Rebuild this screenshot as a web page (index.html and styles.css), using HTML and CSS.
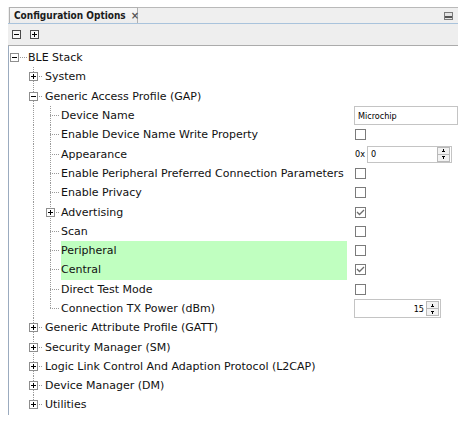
FILE: index.html
```html
<!DOCTYPE html>
<html>
<head>
<meta charset="utf-8">
<link rel="stylesheet" href="styles.css">
</head>
<body>
<div class="panel">
  <div class="tabbar">
    <div class="tab"><span class="tab-title">Configuration Options</span><span class="tab-close">×</span></div>
    <div class="tab-fill"><span class="min-btn"></span></div>
  </div>
  <div class="toolbar">
    <span class="tbtn minus"></span>
    <span class="tbtn plus"></span>
  </div>
  <div class="tree">
    <div class="row">
      <div class="tcell"><span class="conn root"><span class="box minus"></span></span><span class="label">BLE Stack</span></div>
      <div class="val"></div>
    </div>
    <div class="row">
      <div class="tcell"><span class="guide l0"></span><span class="conn l1"><span class="box plus"></span></span><span class="label">System</span></div>
      <div class="val"></div>
    </div>
    <div class="row">
      <div class="tcell"><span class="guide l0"></span><span class="conn l1"><span class="box minus"></span></span><span class="label">Generic Access Profile (GAP)</span></div>
      <div class="val"></div>
    </div>
    <div class="row">
      <div class="tcell"><span class="guide l0"></span><span class="guide l1 line"></span><span class="conn l2"></span><span class="label">Device Name</span></div>
      <div class="val"><span class="field name-field">Microchip</span></div>
    </div>
    <div class="row">
      <div class="tcell"><span class="guide l0"></span><span class="guide l1 line"></span><span class="conn l2"></span><span class="label">Enable Device Name Write Property</span></div>
      <div class="val"><span class="cb"></span></div>
    </div>
    <div class="row">
      <div class="tcell"><span class="guide l0"></span><span class="guide l1 line"></span><span class="conn l2"></span><span class="label">Appearance</span></div>
      <div class="val"><span class="hex">0x</span><span class="field spin-field hex-field"><span class="spin-text">0</span><span class="spin"><span class="sb up"></span><span class="sb down"></span></span></span></div>
    </div>
    <div class="row">
      <div class="tcell"><span class="guide l0"></span><span class="guide l1 line"></span><span class="conn l2"></span><span class="label">Enable Peripheral Preferred Connection Parameters</span></div>
      <div class="val"><span class="cb"></span></div>
    </div>
    <div class="row">
      <div class="tcell"><span class="guide l0"></span><span class="guide l1 line"></span><span class="conn l2"></span><span class="label">Enable Privacy</span></div>
      <div class="val"><span class="cb"></span></div>
    </div>
    <div class="row">
      <div class="tcell"><span class="guide l0"></span><span class="guide l1 line"></span><span class="conn l2"><span class="box plus"></span></span><span class="label">Advertising</span></div>
      <div class="val"><span class="cb checked"><svg viewBox="0 0 11 11" width="11" height="11"><polyline points="2,5 4.5,7.5 9,3" fill="none" stroke="#6d6d6d" stroke-width="1.3"/></svg></span></div>
    </div>
    <div class="row">
      <div class="tcell"><span class="guide l0"></span><span class="guide l1 line"></span><span class="conn l2"></span><span class="label">Scan</span></div>
      <div class="val"><span class="cb"></span></div>
    </div>
    <div class="row">
      <div class="tcell"><span class="guide l0"></span><span class="guide l1 line"></span><span class="conn l2"></span><span class="label hl">Peripheral</span></div>
      <div class="val"><span class="cb"></span></div>
    </div>
    <div class="row">
      <div class="tcell"><span class="guide l0"></span><span class="guide l1 line"></span><span class="conn l2"></span><span class="label hl">Central</span></div>
      <div class="val"><span class="cb checked"><svg viewBox="0 0 11 11" width="11" height="11"><polyline points="2,5 4.5,7.5 9,3" fill="none" stroke="#6d6d6d" stroke-width="1.3"/></svg></span></div>
    </div>
    <div class="row">
      <div class="tcell"><span class="guide l0"></span><span class="guide l1 line"></span><span class="conn l2"></span><span class="label">Direct Test Mode</span></div>
      <div class="val"><span class="cb"></span></div>
    </div>
    <div class="row">
      <div class="tcell"><span class="guide l0"></span><span class="guide l1 line"></span><span class="conn l2 last"></span><span class="label">Connection TX Power (dBm)</span></div>
      <div class="val"><span class="field spin-field tx-field"><span class="spin-text right">15</span><span class="spin"><span class="sb up"></span><span class="sb down"></span></span></span></div>
    </div>
    <div class="row">
      <div class="tcell"><span class="guide l0"></span><span class="conn l1"><span class="box plus"></span></span><span class="label">Generic Attribute Profile (GATT)</span></div>
      <div class="val"></div>
    </div>
    <div class="row">
      <div class="tcell"><span class="guide l0"></span><span class="conn l1"><span class="box plus"></span></span><span class="label">Security Manager (SM)</span></div>
      <div class="val"></div>
    </div>
    <div class="row">
      <div class="tcell"><span class="guide l0"></span><span class="conn l1"><span class="box plus"></span></span><span class="label">Logic Link Control And Adaption Protocol (L2CAP)</span></div>
      <div class="val"></div>
    </div>
    <div class="row">
      <div class="tcell"><span class="guide l0"></span><span class="conn l1"><span class="box plus"></span></span><span class="label">Device Manager (DM)</span></div>
      <div class="val"></div>
    </div>
    <div class="row">
      <div class="tcell"><span class="guide l0"></span><span class="conn l1 last"><span class="box plus"></span></span><span class="label">Utilities</span></div>
      <div class="val"></div>
    </div>
  </div>
</div>
</body>
</html>
```
FILE: styles.css
```css
html, body {
  margin: 0;
  padding: 0;
  background: #ffffff;
}

body {
  font-family: "DejaVu Sans", sans-serif;
  font-size: 11px;
  color: #000000;
}

.panel {
  margin: 7px 0 0 8px;
  width: 450px;
}

/* ---------- tab header ---------- */
.tabbar {
  display: flex;
  height: 16px;
  border-bottom: 1px solid #a9c3dc;
  background: #efefef;
}

.tab {
  display: flex;
  align-items: center;
  width: 129px;
  margin-left: 1px;
  padding-left: 4px;
  box-sizing: border-box;
  border: 1px solid #b1b1b1;
  border-bottom: none;
  background: linear-gradient(#f7f7f7, #ececec);
  white-space: nowrap;
}

.tab-title {
  font-family: "DejaVu Sans Condensed", "DejaVu Sans", sans-serif;
  font-stretch: condensed;
  font-weight: bold;
  font-size: 10px;
  color: #1b1b1b;
}

.tab-close {
  margin-left: 5px;
  font-size: 10px;
  font-weight: bold;
  color: #555555;
}

.tab-fill {
  flex: 1;
  display: flex;
  align-items: center;
  justify-content: flex-end;
  border-top: 1px solid #b9b9b9;
  padding-right: 5px;
}

.min-btn {
  width: 7px;
  height: 6px;
  border: 1px solid #7a7a7a;
  background: linear-gradient(to bottom, #e4e4e4 0 3px, #555555 3px 5px, #e4e4e4 5px);
}

/* ---------- toolbar ---------- */
.toolbar {
  display: flex;
  align-items: center;
  gap: 9px;
  height: 21px;
  padding-left: 4px;
  background: #eeeeee;
  border-bottom: 1px solid #ababab;
}

.tbtn {
  width: 7px;
  height: 7px;
  border: 1px solid #4a4a4a;
  background-color: #f6f6f6;
}

.tbtn.minus {
  background-image: linear-gradient(#000, #000);
  background-size: 5px 1px;
  background-position: center;
  background-repeat: no-repeat;
}

.tbtn.plus {
  background-image: linear-gradient(#000, #000), linear-gradient(#000, #000);
  background-size: 5px 1px, 1px 5px;
  background-position: center, center;
  background-repeat: no-repeat;
}

/* ---------- tree ---------- */
.tree {
  border-left: 1px solid #9babbf;
  padding-top: 2px;
  height: 367px;
  background: #ffffff;
}

.row {
  display: flex;
  height: 19.3px;
  align-items: stretch;
}

.tcell {
  display: flex;
  width: 338px;
  align-items: stretch;
}

.guide, .conn {
  flex: none;
  display: flex;
  align-items: center;
}

.l0 { width: 19px; }
.l1 { width: 17px; }
.l2 { width: 16px; }

.guide.line {
  background: repeating-linear-gradient(to bottom, #9a9a9a 0 1px, transparent 1px 2px) 5px 0 / 1px 100% no-repeat;
}

.conn {
  background:
    repeating-linear-gradient(to bottom, #9a9a9a 0 1px, transparent 1px 2px) 5px 0 / 1px 100% no-repeat,
    repeating-linear-gradient(to right, #9a9a9a 0 1px, transparent 1px 2px) 5px 50% / 10px 1px no-repeat;
}

.conn.last {
  background:
    repeating-linear-gradient(to bottom, #9a9a9a 0 1px, transparent 1px 2px) 5px 0 / 1px 50% no-repeat,
    repeating-linear-gradient(to right, #9a9a9a 0 1px, transparent 1px 2px) 5px 50% / 10px 1px no-repeat;
}

.conn.root {
  width: 19px;
  background: repeating-linear-gradient(to right, #9a9a9a 0 1px, transparent 1px 2px) 5px 50% / 13px 1px no-repeat;
}

.box {
  width: 7px;
  height: 7px;
  margin-left: 1px;
  border: 1px solid #8e8e8e;
  background-color: #ffffff;
  background-repeat: no-repeat;
}

.box.minus {
  background-image: linear-gradient(#000, #000);
  background-size: 5px 1px;
  background-position: center;
}

.box.plus {
  background-image: linear-gradient(#000, #000), linear-gradient(#000, #000);
  background-size: 5px 1px, 1px 5px;
  background-position: center, center;
}

.label {
  flex: 1;
  display: flex;
  align-items: center;
  white-space: nowrap;
  color: #111111;
}

.label.hl {
  background: #c0ffc0;
}

/* ---------- value column ---------- */
.val {
  display: flex;
  align-items: center;
  margin-left: 5px;
  padding-left: 2px;
  flex: 1;
  font-family: "DejaVu Sans Condensed", "DejaVu Sans", sans-serif;
  font-stretch: condensed;
}

.field {
  display: flex;
  align-items: center;
  box-sizing: border-box;
  background: #ffffff;
  border: 1px solid #c4c4c4;
  font-size: 9px;
  color: #000000;
}

.name-field {
  width: 104px;
  height: 19px;
  padding-left: 3px;
}

.cb {
  display: block;
  width: 11px;
  height: 11px;
  margin-left: 1px;
  box-sizing: border-box;
  border: 1px solid #7b7b7b;
  background: #ffffff;
}

.cb svg {
  display: block;
  margin: -1px 0 0 -1px;
}

.hex {
  margin-left: 1px;
  font-size: 9px;
  width: 12px;
}

.spin-field {
  justify-content: space-between;
  padding: 0 1px 0 3px;
}

.hex-field {
  width: 85px;
  height: 17px;
}

.tx-field {
  width: 87px;
  height: 19px;
}

.spin-text.right {
  flex: 1;
  text-align: right;
  padding-right: 2px;
}

.spin {
  display: flex;
  flex-direction: column;
  width: 13px;
  height: 15px;
}

.sb {
  flex: 1;
  box-sizing: border-box;
  border: 1px solid #b9b9b9;
  background-color: #f2f2f2;
  background-repeat: no-repeat;
  background-position: center;
  background-size: 5px 3px;
}

.sb.down {
  border-top: none;
  background-image: conic-gradient(from -30deg at 50% 100%, #000 0 60deg, transparent 60deg);
}

.sb.up {
  background-image: conic-gradient(from 150deg at 50% 0, #000 0 60deg, transparent 60deg);
}
```
